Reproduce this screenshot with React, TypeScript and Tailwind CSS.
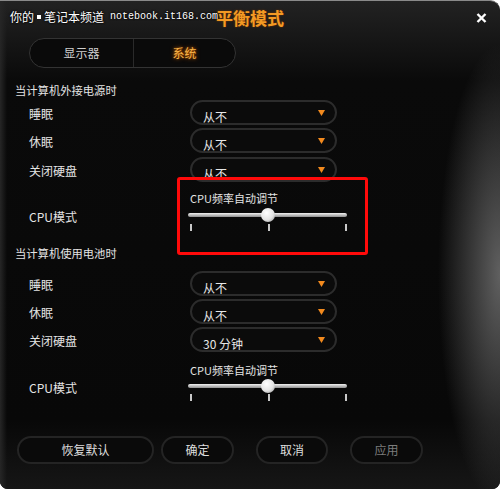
import React from "react";

function Arrow() {
  return (
    <svg width="7" height="6" viewBox="0 0 7 6">
      <path d="M0 0H7L3.5 6Z" fill="#f28a1e" />
    </svg>
  );
}

function Select({ value }: { value: string }) {
  return (
    <div className="flex h-[25px] w-[147px] items-center justify-between rounded-full border-2 border-[#2c2c2c] bg-[#0b0b0b] pl-[11px] pr-[10px]">
      <span className="mt-[8px] text-[12px] leading-[16px] text-[#e6e6e6]">{value}</span>
      <Arrow />
    </div>
  );
}

function Row({ label, value, className }: { label: string; value: string; className: string }) {
  return (
    <div className={`flex items-start ${className}`}>
      <div className="h-[25px] w-[175px] pl-[14px] text-[12px] leading-[27px] text-[#e4e4e4]">{label}</div>
      <Select value={value} />
    </div>
  );
}

function Slider({ gap }: { gap: string }) {
  return (
    <div className="w-[159px]">
      <div className="pl-[2px] text-[11px] leading-[16px] text-[#e4e4e4]">CPU频率自动调节</div>
      <div className={`relative h-[4px] rounded-full bg-[linear-gradient(#f2f2f2,#8e8e8e)] ${gap}`}>
        <div className="absolute left-[73px] top-[-5px] h-[14px] w-[14px] rounded-full bg-[radial-gradient(circle_at_40%_35%,#ffffff,#e4e4e4_55%,#8a8a8a)]" />
      </div>
      <div className={`flex justify-between pl-[2px] ${gap}`}>
        <span className="h-[7px] w-[2px] bg-[#c8c8c8]" />
        <span className="h-[7px] w-[2px] bg-[#c8c8c8]" />
        <span className="h-[7px] w-[2px] bg-[#c8c8c8]" />
      </div>
    </div>
  );
}

function CpuRow({ className, gap, labelTop }: { className: string; gap: string; labelTop: string }) {
  return (
    <div className={`flex items-start ${className}`}>
      <div className={`w-[173px] pl-[14px] text-[12px] leading-[16px] text-[#e4e4e4] ${labelTop}`}>CPU模式</div>
      <Slider gap={gap} />
    </div>
  );
}

function Button({ label, className, muted }: { label: string; className: string; muted?: boolean }) {
  return (
    <div
      className={`flex h-[28px] items-center justify-center rounded-full border-2 border-[#242424] bg-[#0a0a0a] text-[12px] ${
        muted ? "text-[#7c7c7c]" : "text-[#dedede]"
      } ${className}`}
    >
      {label}
    </div>
  );
}

export default function App() {
  return (
    <div className="h-[489px] w-[500px] bg-white font-['Noto_Sans_CJK_SC','Noto_Sans',sans-serif]">
      <div className="relative flex h-full flex-col overflow-hidden rounded-tr-[10px] rounded-b-[8px] border-t border-[#8a8a8a] bg-[#080808] bg-[radial-gradient(ellipse_62px_230px_at_100%_56%,#606060,transparent),linear-gradient(to_right,#262626,transparent_7px),linear-gradient(to_bottom,#222222,#0a0a0a_80px,#080808_420px,#161616)]">
        {/* watermark */}
        <div className="absolute left-[10px] top-[8px] z-10 flex items-center whitespace-nowrap text-white [text-shadow:0_0_2px_#000,0_0_2px_#000]">
          <span className="text-[12px] leading-[16px]">你的</span>
          <span className="mx-[3px] h-[4px] w-[4px] bg-white" />
          <span className="text-[12px] leading-[16px]">笔记本频道</span>
          <span className="ml-[6px] font-['Liberation_Mono',monospace] text-[10px] leading-[16px]">notebook.it168.com</span>
        </div>

        {/* title bar */}
        <div className="grid h-[33px] grid-cols-[1fr_auto_1fr] items-center">
          <div />
          <div className="text-[17px] font-bold text-[#f39a24] [text-shadow:0_0_2px_#7a3a00]">平衡模式</div>
          <div className="flex justify-end pr-[13px]">
            <svg width="11" height="10" viewBox="0 0 11 10">
              <path d="M1.5 1L9.5 9M9.5 1L1.5 9" stroke="#ffffff" strokeWidth="2.4" />
            </svg>
          </div>
        </div>

        <div className="flex flex-col pl-[15px]">
          {/* tabs */}
          <div className="ml-[14px] mt-[4px] flex h-[30px] w-[207px] overflow-hidden rounded-full border-[1.5px] border-[#333333] bg-[#0a0a0a]">
            <div className="flex w-[104px] items-center justify-center border-r border-[#2a2a2a] text-[12px] text-[#cfcfcf]">
              显示器
            </div>
            <div className="flex flex-1 items-center justify-center text-[12px] text-[#f7b548] [text-shadow:0_0_4px_#c25e00,0_0_2px_#a04800]">
              系统
            </div>
          </div>

          <div className="mt-[14px] text-[11.3px] leading-[16px] text-[#e4e4e4]">当计算机外接电源时</div>
          <Row label="睡眠" value="从不" className="mt-[2px]" />
          <Row label="休眠" value="从不" className="mt-[3px]" />
          <Row label="关闭硬盘" value="从不" className="mt-[4px]" />
          <CpuRow className="mt-[8px]" gap="mt-[7px]" labelTop="mt-[19px]" />

          <div className="mt-[14px] text-[11.3px] leading-[16px] text-[#e4e4e4]">当计算机使用电池时</div>
          <Row label="睡眠" value="从不" className="mt-[10px]" />
          <Row label="休眠" value="从不" className="mt-[3px]" />
          <Row label="关闭硬盘" value="30 分钟" className="mt-[3px]" />
          <CpuRow className="mt-[10px]" gap="mt-[6px]" labelTop="mt-[18px]" />

          <div className="ml-[2px] mt-[35px] flex">
            <Button label="恢复默认" className="w-[137px]" />
            <Button label="确定" className="ml-[7px] w-[73px]" />
            <Button label="取消" className="ml-[22px] w-[72px]" />
            <Button label="应用" className="ml-[22px] w-[73px]" muted />
          </div>
        </div>

        {/* annotation box */}
        <div className="absolute left-[177px] top-[176px] h-[78px] w-[191px] rounded-[3px] border-[3px] border-[#ff0a0a]" />
      </div>
    </div>
  );
}
